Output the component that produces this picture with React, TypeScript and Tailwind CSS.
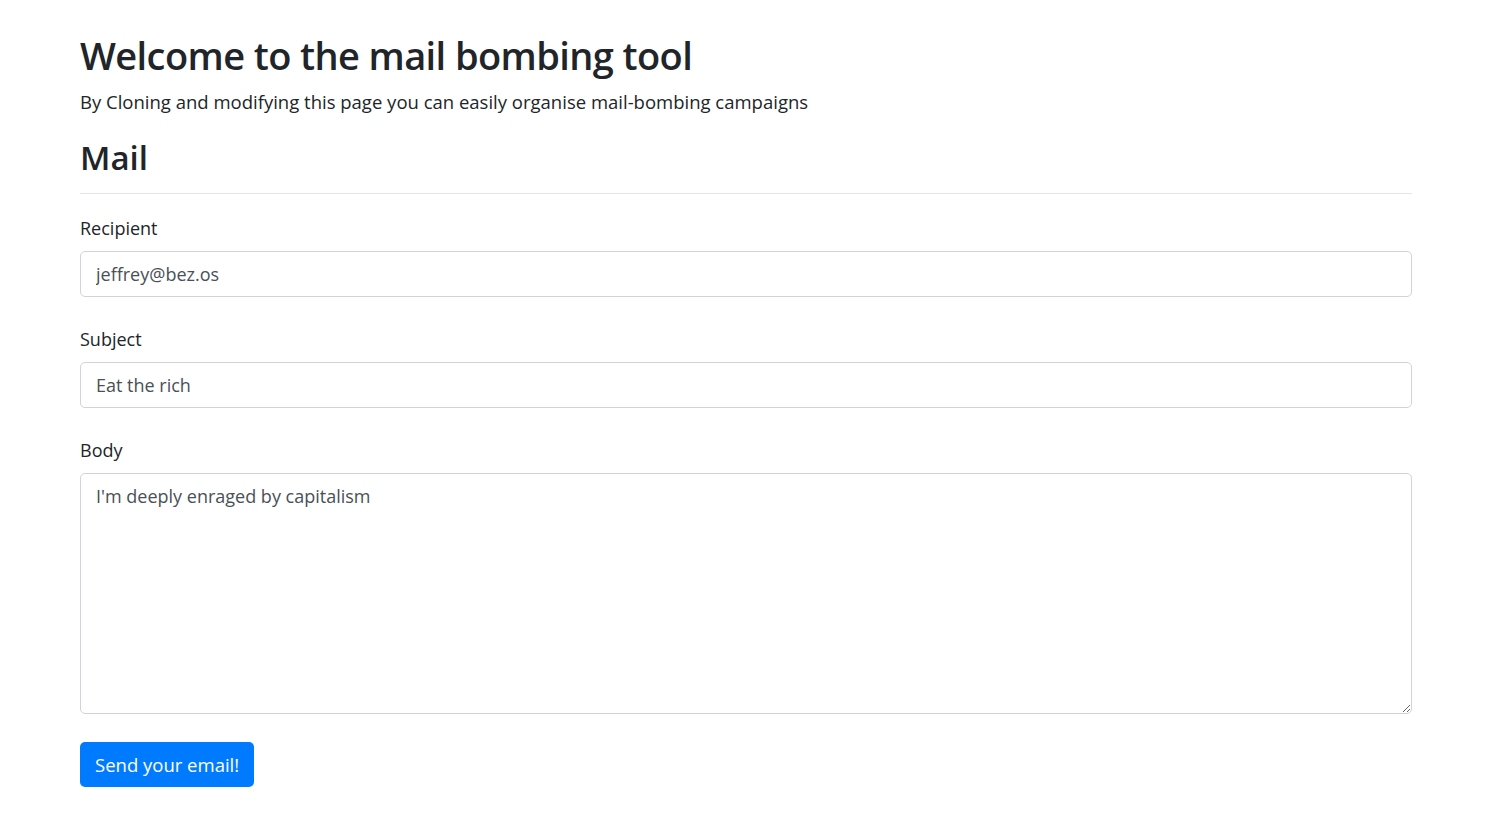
const Field = ({ label, value }: { label: string; value: string }) => (
  <div className="mb-[29px]">
    <label className="block mb-[9px] text-[18px] leading-[27px] text-[#212529]">{label}</label>
    <input
      type="text"
      defaultValue={value}
      className="block w-full h-[46px] px-[15px] text-[18px] text-[#495057] bg-white border border-[#ced4da] rounded-[5px] outline-none"
    />
  </div>
)

export default function App() {
  return (
    <div
      className="min-h-screen bg-white pl-[80px] pr-[86px] pt-[30px] text-[#212529]"
      style={{ fontFamily: '"Open Sans", "Noto Sans", sans-serif' }}
    >
      <h1 className="text-[38px] leading-[50px] font-semibold tracking-[-0.6px] mb-[8px]">
        Welcome to the mail bombing tool
      </h1>
      <p className="text-[18.5px] leading-[27px] mb-[22px]">
        By Cloning and modifying this page you can easily organise mail-bombing campaigns
      </p>
      <h2 className="text-[33px] leading-[42px] font-semibold">Mail</h2>
      <hr className="mt-[14px] mb-[21px] border-t border-[#e5e5e5]" />
      <form onSubmit={(e) => e.preventDefault()}>
        <Field label="Recipient" value="jeffrey@bez.os" />
        <Field label="Subject" value="Eat the rich" />
        <div className="mb-[28px]">
          <label className="block mb-[9px] text-[18px] leading-[27px]">Body</label>
          <textarea
            defaultValue="I'm deeply enraged by capitalism"
            className="block w-full h-[241px] px-[15px] py-[9px] text-[18px] leading-[27px] text-[#495057] bg-white border border-[#ced4da] rounded-[5px] outline-none"
          />
        </div>
        <button
          type="submit"
          className="h-[45px] px-[15px] text-[18.5px] text-white bg-[#007bff] rounded-[5px]"
        >
          Send your email!
        </button>
      </form>
    </div>
  )
}
